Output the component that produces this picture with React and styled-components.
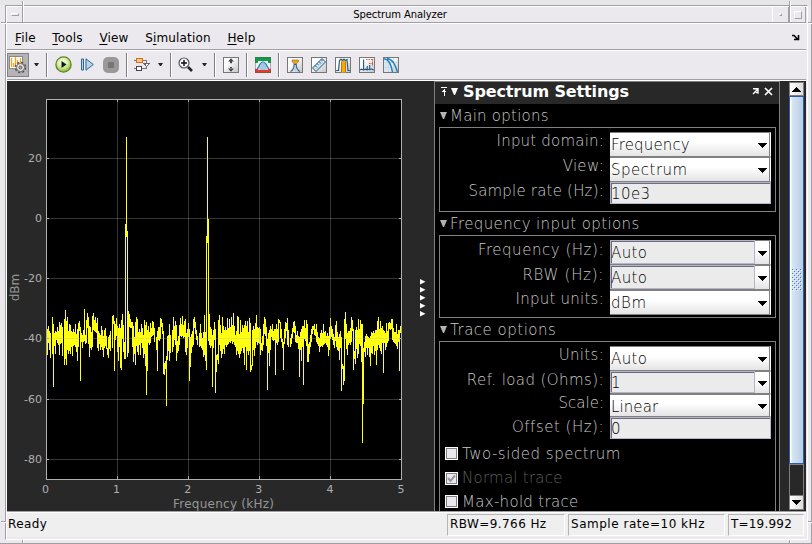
import styled, { createGlobalStyle, css } from 'styled-components';

const TRACE = `10,150 13,65 16,103 19,160 25,40 28,248 31,88 33,148 35,80 37,105 40,68 43,120 46,55 46,150 50,68 52,58 56,155 60,45 61,180
64,18 67,180 70,38 73,148 76,60 78,70 80,148 83,82 85,155 88,75 91,120 94,60 96,135 98,98 100,170 103,65 106,52 109,230 112,88 115,130
118,88 121,15 124,118 127,75 130,28 133,55 136,158 139,70 142,135 145,50 148,28 151,80 154,40 156,85 160,42 163,140 166,88 169,135 172,65
175,100 178,158 181,88 184,72 187,130 190,135 193,160 196,92 200,138 205,42 208,33 211,200 214,90 217,42 220,100 223,170 226,60 229,188
232,195 235,30 238,110 241,162 244,164 244,-195 247,-501 250,-171 250,158 253,20 256,30 259,70 262,55 265,55 268,173 271,100 274,182
277,40 280,55 283,152 286,75 289,150 292,60 295,88 298,160 301,48 304,185 307,55 307,270 310,188 313,65 316,120 319,58 322,98 325,52
328,55 331,95 337,125 340,200 343,68 346,110 349,42 352,50 355,68 358,208 361,210 364,172 367,305 370,140 373,92 376,168 376,60 379,145
385,135 388,40 391,105 394,50 397,168 400,110 403,140 406,92 409,42 412,98 415,36 418,100 421,60 424,45 427,152 430,100 433,58 436,230
439,180 442,90 445,128 448,50 451,40 454,72 457,88 460,108 466,128 469,60 472,130 475,103 478,158 481,32 484,165 487,197 487,-150
490,-501 493,-213 493,110 496,30 499,130 502,75 505,248 508,110 511,55 514,266 517,190 520,150 523,178 526,33 529,110 532,160 535,38
538,110 541,148 544,70 547,128 550,42 553,118 556,45 559,115 562,38 565,118 568,28 571,120 574,92 577,152 580,35 583,45 586,160 589,48
592,138 595,62 598,90 601,180 604,50 607,195 610,50 613,150 616,42 619,203 622,195 625,182 628,65 631,155 634,90 637,33 640,120 643,75
646,68 649,150 652,118 655,138 658,92 661,40 664,50 667,100 670,255 673,88 676,185 679,65 682,98 685,60 688,110 691,75 694,210 697,60
700,120 703,45 706,55 709,55 712,105 715,118 718,195 721,105 724,55 727,80 730,42 733,128 739,128 742,100 745,85 748,62 751,50 754,88
757,115 760,80 763,118 766,218 769,85 772,170 775,65 778,240 781,48 784,110 787,48 790,172 793,172 796,115 799,128 802,90 805,65 808,75
811,60 814,95 817,60 820,118 823,98 826,143 829,100 832,78 835,128 838,60 841,118 844,82 847,120 850,88 853,155 856,110 859,42 862,98
865,75 868,110 871,130 874,80 877,50 880,135 883,98 886,165 889,80 892,260 895,180 898,242 901,228 904,25 907,110 910,150 913,80 916,80
919,120 922,40 925,60 928,195 931,140 934,178 937,68 940,160 943,45 946,118 949,48 952,172 955,60 955,414 958,278 961,115 964,158
967,90 970,150 973,100 976,115 979,185 982,85 985,148 988,80 991,152 994,78 997,180 1000,68 1003,40 1006,130 1009,52 1012,148 1015,65
1018,205 1021,82 1024,135 1027,58 1030,115 1033,60 1036,55 1039,75 1042,45 1045,45 1048,112 1051,85 1054,118 1057,60 1060,132 1063,78
1066,198 1069,65`;

const MEAN = 105;

// one vertical bar per sample; tall spikes keep to their own column
function tracePath() {
  const pts = TRACE.split(/\s+/).map(p => p.split(',').map(Number));
  const px = y => (304 + y / 3).toFixed(1);
  return pts.map(([x, y], i) => {
    const ends = [pts[i - 1], pts[i + 1]].filter(Boolean).map(([, n]) => {
      const own = Math.abs(y - MEAN);
      const next = Math.abs(n - MEAN);
      let reach = 0.6;
      if (own > next) reach = 0.9;
      else if (next > 80) reach = 0.15;
      return y + (n - y) * reach;
    });
    return `M${44.5 + Math.floor(x / 3)} ${px(Math.min(y, ...ends))}V${px(Math.max(y, ...ends) + 2)}`;
  }).join('');
}

const X_TICKS = [0, 1, 2, 3, 4, 5];
const Y_TICKS = [[20, 158], [0, 218], [-20, 278], [-40, 338], [-60, 399], [-80, 459]];

const MENU = ['File', 'Tools', 'View', 'Simulation', 'Help'];

const GROUPS = [
  {
    title: 'Main options',
    ls: 0.25,
    rows: [
      { label: 'Input domain:', ls: 0.2, value: 'Frequency', vls: 0.15, type: 'select', h: 25 },
      { label: 'View:', ls: 0.3, value: 'Spectrum', vls: 0.5, type: 'select', h: 25 },
      { label: 'Sample rate (Hz):', ls: 0.2, value: '10e3', vls: 0.4, type: 'input', h: 23 },
    ],
    height: 85,
  },
  {
    title: 'Frequency input options',
    ls: 0.38,
    rows: [
      { label: 'Frequency (Hz):', ls: 0.53, shift: 2, value: 'Auto', vls: 0.4, type: 'edit', h: 25 },
      { label: 'RBW (Hz):', ls: 0.7, shift: 2, value: 'Auto', vls: 0.4, type: 'edit', h: 25 },
      { label: 'Input units:', ls: 0.25, value: 'dBm', vls: 0.6, type: 'select', h: 25 },
    ],
    height: 83,
  },
  {
    title: 'Trace options',
    ls: 0.5,
    rows: [
      { label: 'Units:', ls: 0.3, value: 'Auto', vls: 0.4, type: 'select', h: 25 },
      { label: 'Ref. load (Ohms):', ls: 0.42, value: '1', type: 'edit', h: 23 },
      { label: 'Scale:', value: 'Linear', vls: 0.1, type: 'select', h: 23 },
      { label: 'Offset (Hz):', ls: 0.5, shift: 2, value: '0', type: 'input', h: 23 },
    ],
    checks: [
      { label: 'Two-sided spectrum', ls: 0.5, h: 25 },
      { label: 'Normal trace', ls: 0.25, checked: true, disabled: true, h: 24 },
      { label: 'Max-hold trace', ls: 0.3, h: 23 },
    ],
    height: 180,
  },
];

function Tile({ children }) {
  return (
    <svg width="16" height="16" viewBox="0 0 16 16">
      <defs>
        <linearGradient id="tile" x1="0" y1="0" x2="1" y2="1">
          <stop offset=".3" stopColor="#fff" />
          <stop offset="1" stopColor="#c4c4c4" />
        </linearGradient>
      </defs>
      <rect x=".5" y=".5" width="15" height="15" fill="url(#tile)" stroke="#777" />
      {children}
    </svg>
  );
}

function SettingsIcon() {
  return (
    <svg width="18" height="18" viewBox="0 0 18 18">
      <rect x=".5" y=".5" width="13" height="12" fill="#fff" stroke="#8a8a8a" />
      <path d="M2.5 2v9M4.5 7v4M6.5 1v9M8.5 4v4M11.5 2v5" stroke="#f5a21b" strokeWidth="1.3" fill="none" />
      <circle cx="11.5" cy="11.5" r="5" fill="none" stroke="#555" strokeWidth="1.6" strokeDasharray="2.2 1.727" />
      <circle cx="11.5" cy="11.5" r="4" fill="#ececec" stroke="#666" />
      <circle cx="11.5" cy="11.5" r="1.6" fill="#b4b3b7" stroke="#555" />
    </svg>
  );
}

function PlayIcon() {
  return (
    <svg width="17" height="17" viewBox="0 0 17 17">
      <defs>
        <radialGradient id="play" cx=".45" cy=".35" r=".65">
          <stop offset="0" stopColor="#fbfff0" />
          <stop offset=".5" stopColor="#d8efa4" />
          <stop offset="1" stopColor="#83b934" />
        </radialGradient>
      </defs>
      <circle cx="8.5" cy="8.5" r="7.6" fill="url(#play)" stroke="#5c852c" strokeWidth="1.3" />
      <path d="M6.5 5v7l5-3.500z" fill="#171717" />
    </svg>
  );
}

function StepIcon() {
  return (
    <svg width="13" height="13" viewBox="0 0 13 13">
      <path d="M.5 1h2v11h-2zM5 .8v11.4l7.3-5.7z" fill="#b9d4ea" stroke="#2a6591" />
    </svg>
  );
}

function StopIcon() {
  return (
    <svg width="16" height="16" viewBox="0 0 16 16">
      <rect width="16" height="16" rx="5" fill="#999" />
      <rect x="5" y="5" width="6" height="6" fill="#777" />
    </svg>
  );
}

function BlocksIcon() {
  return (
    <svg width="16" height="16" viewBox="0 0 16 16" shapeRendering="crispEdges">
      <path d="M0 3.5h3M8 3.5h4.5v3M0 11.5h3M7 11.5h5.5v-2" stroke="#777" fill="none" />
      <path d="M10 6.5h5.5L12.7 9.5z" fill="#fff" stroke="#666" />
      <rect x="2.5" y="1.5" width="6" height="4" fill="#ffc68e" stroke="#d96b12" />
      <rect x="2.5" y="9.5" width="5" height="4" fill="#fff" stroke="#444" />
    </svg>
  );
}

function ZoomIcon() {
  return (
    <svg width="16" height="16" viewBox="0 0 16 16">
      <path d="M10 10l4 4" stroke="#252525" strokeWidth="2.6" />
      <circle cx="6" cy="6" r="5" fill="#f4fafc" stroke="#555" strokeWidth="1.2" />
      <path d="M3 6h6M6 3v6" stroke="#111" strokeWidth="1.5" />
    </svg>
  );
}

function ScaleIcon() {
  return (
    <Tile>
      <path d="M5 4.5l3-3.200 3 3.200zM5 11.500l3 3.200 3-3.200zM7 4h2v2.200H7zM7 10h2v2H7z" fill="#444" />
    </Tile>
  );
}

function MaskIcon() {
  return (
    <svg width="16" height="16" viewBox="0 0 16 16">
      <rect width="16" height="16" fill="#eef3f5" />
      <path d="M1 13c3-1 3-8 7-8s4 7 7 8" fill="#b5d4ec" stroke="#3475a8" strokeWidth="1.2" />
      <path d="M8 5v8M6 7v6M10 7v6" stroke="#7fabc9" strokeWidth=".6" />
      <path d="M0 0h16v6h-3V4H3v2H0z" fill="#139c46" />
      <path d="M0 12h3v1h10v-1h3v4H0z" fill="#e23a2b" />
      <rect x=".5" y=".5" width="15" height="15" fill="none" stroke="#555" strokeOpacity=".45" />
    </svg>
  );
}

function PeakIcon() {
  return (
    <Tile>
      <path d="M5 3h6.5v1.5L9.3 7H7.2L5 4.5z" fill="#e9a423" stroke="#98701c" strokeWidth=".7" />
      <path d="M3.5 14.5c2.5-1 3.5-3 3.7-7h2c.2 4 1.2 6 3.7 7" fill="none" stroke="#34628d" strokeWidth="1.2" />
      <path d="M8.2 8v6" stroke="#9dc0dc" />
    </Tile>
  );
}

function RulerIcon() {
  return (
    <Tile>
      <path d="M1.5 11L11 1.5 14.5 5 5 14.5z" fill="#c6e0f0" stroke="#2d5878" />
      <path d="M4 8.5l2 2M6 6.5l1.500 1.500M8 4.5l2 2M10 2.5L11.5 4" stroke="#2d5878" strokeWidth=".9" />
    </Tile>
  );
}

function BandIcon() {
  return (
    <Tile>
      <path d="M6 3h5v12.500H6z" fill="#f6aa12" />
      <path d="M1 13.5h2.500l1-10L6 2l1.500 1.500L9 2l1.500 1.500L12 2.500l1 11h2" fill="none" stroke="#255f8c" strokeWidth="1.2" />
      <path d="M6.5 5v10M10.500 5v10" stroke="#b36c00" strokeWidth=".8" />
    </Tile>
  );
}

function DistortionIcon() {
  return (
    <Tile>
      <path d="M1 13l1.500-.8 1 .5 1.100-.5V2.500V13l2-.8 1.600.6V9v4l2.500-1V8v4.500l2-.5 2 1" fill="none" stroke="#1d5384" strokeWidth="1.1" />
      <path d="M7 2.500h7M10 6.500h4M13.500 2v7" stroke="#df5a33" strokeDasharray="1.5 1" fill="none" />
    </Tile>
  );
}

function CcdfIcon() {
  return (
    <Tile>
      <path d="M1 1.500C7 2 9 7 9.500 15H1z" fill="#d7e8f4" />
      <path d="M5.500 1v14M10.500 1v14M1 5.500h14M1 10.500h14" stroke="#cdd5da" strokeWidth=".8" />
      <path d="M1 1.800C6 2 8 7 9.500 15M4 1.500c6 1 8 6 10.500 13.500" fill="none" stroke="#1781bd" strokeWidth="1.4" />
    </Tile>
  );
}

const TOOLS = [
  { icon: SettingsIcon, pressed: true, menu: 5, sep: 7 },
  { icon: PlayIcon, at: 7, after: 9 },
  { icon: StepIcon, after: 9 },
  { icon: StopIcon, sep: 7 },
  { icon: BlocksIcon, at: 6, menu: 8, sep: 7 },
  { icon: ZoomIcon, at: 6, menu: 8, sep: 7 },
  { icon: ScaleIcon, at: 7, sep: 7 },
  { icon: MaskIcon, at: 7, sep: 7 },
  { icon: PeakIcon, at: 7, after: 8 },
  { icon: RulerIcon, after: 8 },
  { icon: BandIcon, after: 8 },
  { icon: DistortionIcon, after: 8 },
  { icon: CcdfIcon },
];

function Plot() {
  return (
    <PlotArea width="427" height="430" viewBox="7 81 427 430">
      <rect x="46" y="99" width="356" height="381" fill="#000" />
      <g shapeRendering="crispEdges">
        <path d={tracePath()} fill="none" stroke="#ffff11" />
        {X_TICKS.slice(1, 5).map(t => (
          <rect key={t} x={46 + 71 * t} y="100" width="1" height="379" fill="#afafaf" fillOpacity=".3" />
        ))}
        {Y_TICKS.map(([t, y]) => (
          <rect key={t} x="47" y={y} width="354" height="1" fill="#afafaf" fillOpacity=".3" />
        ))}
        {X_TICKS.map(t => (
          <path key={t} d={`M${46.5 + 71 * t} 99v3M${46.5 + 71 * t} 476v3`} stroke="#afafaf" />
        ))}
        {Y_TICKS.map(([t, y]) => (
          <path key={t} d={`M46 ${y + 0.5}h3M399 ${y + 0.5}h3`} stroke="#afafaf" />
        ))}
        <rect x="46.5" y="99.5" width="355" height="380" fill="none" stroke="#afafaf" />
      </g>
      <g fill="#afafaf" fontSize="11">
        {Y_TICKS.map(([t, y]) => (
          <text key={t} x="42" y={y + 4} textAnchor="end">{t}</text>
        ))}
        {X_TICKS.map(t => (
          <text key={t} x={45.5 + 71.1 * t} y="493" textAnchor="middle">{t}</text>
        ))}
      </g>
      <g fill="#969696" fontSize="12">
        <text x="223.5" y="508" textAnchor="middle" textLength="101">Frequency (kHz)</text>
        <text transform="translate(19 287.5) rotate(-90)" textAnchor="middle">dBm</text>
      </g>
      <path d="M420 279v5.500l5.500-2.700zM420 287v5.500l5.500-2.700zM420 295v5.500l5.500-2.700zM420 303v5.500l5.500-2.700zM420 311v5.500l5.500-2.700z" fill="#fff" />
    </PlotArea>
  );
}

function Field({ type, value, h, vls }) {
  if (type === 'input') return <Input $h={h - 1} $ls={vls}>{value}</Input>;
  if (type === 'edit') {
    return (
      <Combo $h={h}>
        <Input $h={h - 1} $ls={vls} $grow>{value}</Input>
        <DropButton><Caret /></DropButton>
      </Combo>
    );
  }
  return (
    <Combo $h={h}>
      <Value $ls={vls} $h={h}>{value}</Value>
      <DropCaret><Caret /></DropCaret>
    </Combo>
  );
}

function Caret({ up }) {
  return (
    <svg width="9" height="5" viewBox="0 0 9 5" shapeRendering="crispEdges">
      <path d={up ? 'M0 5L4 0h1l4 5z' : 'M0 0h9L5 5H4z'} fill="#000" />
    </svg>
  );
}

function Settings() {
  return (
    <Panel>
      <PanelHead>
        <svg width="6" height="9" viewBox="0 0 6 9" shapeRendering="crispEdges">
          <path d="M0 .5h6M3 2v7M1 4.5h4M2 3.5h2" stroke="#fff" fill="none" />
        </svg>
        <Triangle $white />
        <PanelTitle>Spectrum Settings</PanelTitle>
        <svg width="22" height="10" viewBox="0 0 22 10">
          <path d="M1 1.800h5v5M1 7l5-5M3 4l2 2" stroke="#fff" strokeWidth="1.4" fill="none" />
          <path d="M13 1l7 7M20 1l-7 7" stroke="#fff" strokeWidth="1.7" />
        </svg>
      </PanelHead>
      {GROUPS.map(g => (
        <div key={g.title}>
          <GroupTitle $ls={g.ls}><Triangle />{g.title}</GroupTitle>
          <Group $h={g.height} $open={!!g.checks}>
            {g.rows.map(r => (
              <Row key={r.label} $h={r.h}>
                <Label $ls={r.ls} $shift={r.shift}>{r.label}</Label>
                <Field {...r} />
              </Row>
            ))}
            {g.checks && (
              <Checks>
                {g.checks.map(c => (
                  <Check key={c.label} $h={c.h} $ls={c.ls} $disabled={c.disabled}>
                    <Box>
                      {c.checked && (
                        <svg width="9" height="9" viewBox="0 0 9 9"><path d="M1 4l2.5 3L8 1.5" stroke="#9b99a0" strokeWidth="2" fill="none" /></svg>
                      )}
                    </Box>
                    <span>{c.label}</span>
                  </Check>
                ))}
              </Checks>
            )}
          </Group>
        </div>
      ))}
    </Panel>
  );
}

export default function App() {
  return (
    <Desktop>
      <GlobalStyle />
      <Window>
        <TitleBar>
          <TitleButton><Dash /></TitleButton>
          <Title>Spectrum Analyzer</Title>
          <TitleButton $left><Square $s={3} /></TitleButton>
          <TitleButton $left><Square $s={8} /></TitleButton>
        </TitleBar>
        <MenuBar>
          {MENU.map(m => {
            const i = m === 'Simulation' ? 1 : 0;
            return <MenuItem key={m}>{m.slice(0, i)}<u>{m[i]}</u>{m.slice(i + 1)}</MenuItem>;
          })}
          <Undock width="8" height="7" viewBox="0 0 8 7">
            <path d="M0 1.5h2l4 4M2 5.5h4.500V1" stroke="#000" strokeWidth="1.6" fill="none" />
          </Undock>
        </MenuBar>
        <Toolbar>
          {TOOLS.map(({ icon: Icon, at, after, menu, sep, pressed }, i) => (
            <ToolItem key={i}>
              <Tool $pressed={pressed} $at={at} $after={after}><Icon /></Tool>
              {menu && <MenuArrow $gap={menu} />}
              {sep && <Separator $gap={sep} />}
            </ToolItem>
          ))}
        </Toolbar>
        <Content>
          <Plot />
          <Settings />
          <Scrollbar>
            <ScrollButton $h={14}><Caret up /></ScrollButton>
            <Thumb><Grip /></Thumb>
            <Trough />
            <ScrollButton $h={15}><Caret /></ScrollButton>
          </Scrollbar>
        </Content>
        <StatusBar>
          <Ready>Ready</Ready>
          <Status $w={118} $ls={0.42}>RBW=9.766 Hz</Status>
          <Status $w={157} $ls={0.52}>Sample rate=10 kHz</Status>
          <Status $w={76} $ls={0.2}>T=19.992</Status>
        </StatusBar>
      </Window>
      <Notch $x={22} $y={1} $tall />
      <Notch $x={789} $y={1} $tall />
      <Notch $x={22} $y={540} />
      <Notch $x={789} $y={540} />
      <SideNotch $x={1} $y={22} />
      <SideNotch $x={808} $y={22} />
      <SideNotch $x={1} $y={521} />
      <SideNotch $x={808} $y={521} />
    </Desktop>
  );
}

const GlobalStyle = createGlobalStyle`
  * { box-sizing: border-box; }
  body {
    margin: 0;
    overflow: hidden;
    background: #e6e6e6;
    font-family: "DejaVu Sans", sans-serif;
  }
  svg { display: block; flex: none; }
`;

const Desktop = styled.div`
  position: relative;
  width: 812px;
  height: 544px;
  padding: 5px 3px 3px 5px;
  background: linear-gradient(#e6e6e6 5px, #ebe9ed 5px);
  border-right: 1px solid #a19fa4;
  border-bottom: 1px solid #a19fa4;
`;

const Window = styled.div`
  display: flex;
  flex-direction: column;
  width: 803px;
  height: 535px;
  background: #ebe9ed;
  border: 1px solid #a19fa4;
  border-right-color: #fff;
  border-bottom-color: #fff;
  box-shadow: inset 1px 1px #fff;
  padding: 1px 1px 0 1px;
`;

const TitleBar = styled.div`
  display: flex;
  height: 16px;
  flex: none;
  border-bottom: 1px solid #a19fa4;
`;

const TitleButton = styled.div`
  display: flex;
  align-items: center;
  justify-content: center;
  width: 16px;
  border-right: 1px solid #a19fa4;
  ${props => props.$left && css`
    width: 17px;
    border-left: 1px solid #fff;
  `}
`;

const Title = styled.div`
  flex: 1;
  padding-left: 5px;
  text-align: center;
  font-size: 10px;
  letter-spacing: -0.1px;
  line-height: 15px;
  color: #000;
`;

const Dash = styled.span`
  width: 8px;
  height: 3px;
  border: 1px solid #a19fa4;
  border-top-color: #fff;
  border-left-color: #fff;
`;

const Square = styled.span`
  width: ${props => props.$s}px;
  height: ${props => props.$s}px;
  border: 1px solid #a19fa4;
  border-top-color: #fff;
  border-left-color: #fff;
`;

const MenuBar = styled.div`
  display: flex;
  flex: none;
  align-items: center;
  gap: 16.6px;
  height: 27px;
  padding: 2px 6px 0 8px;
  border-top: 1px solid #fff;
  border-bottom: 1px solid #a19fa4;
`;

const MenuItem = styled.div`
  font-size: 12px;
  letter-spacing: 0.17px;
  line-height: 16px;
  u { text-underline-offset: 2px; }
`;

const Undock = styled.svg`
  margin-left: auto;
`;

const Toolbar = styled.div`
  display: flex;
  flex: none;
  align-items: center;
  height: 30px;
  padding-bottom: 1px;
  border-top: 1px solid #fff;
  border-bottom: 1px solid #a19fa4;
`;

const ToolItem = styled.div`
  display: flex;
  align-items: center;
`;

const Tool = styled.div`
  display: flex;
  align-items: center;
  justify-content: center;
  height: 24px;
  margin-left: ${props => props.$at || 0}px;
  margin-right: ${props => props.$after || 0}px;
  ${props => props.$pressed && css`
    width: 22px;
    background: #b4b3b7;
    border: 1px solid #828184;
  `}
`;

const MenuArrow = styled.span`
  width: 5px;
  margin-left: ${props => props.$gap}px;
  border: 3px solid transparent;
  border-width: 3px 2.5px 0;
  border-top-color: #222;
`;

const Separator = styled.span`
  width: 2px;
  height: 24px;
  margin-left: ${props => props.$gap}px;
  background: linear-gradient(90deg, #807f83 50%, #fff 50%);
`;

const Content = styled.div`
  display: flex;
  flex: none;
  height: 431px;
  border-top: 1px solid #fff;
  background: #282828;
  overflow: hidden;
`;

const PlotArea = styled.svg`
  font-family: "DejaVu Sans", sans-serif;
`;

const Panel = styled.div`
  flex: none;
  width: 346px;
  background: #000;
  border-left: 1px solid #808080;
  border-right: 1px solid #808080;
  font-size: 15px;
  font-weight: 200;
  overflow: hidden;
`;

const PanelHead = styled.div`
  display: flex;
  align-items: center;
  height: 23px;
  padding: 0 5px 3px 6px;
  border-top: 1px solid #808080;
  background: #282828;
`;

const PanelTitle = styled.div`
  flex: 1;
  margin-left: 5px;
  font-size: 16px;
  font-weight: 700;
  letter-spacing: -0.12px;
  line-height: 18px;
  color: #fff;
`;

const Triangle = styled.span`
  flex: none;
  width: 7px;
  margin: 0 0 0 4px;
  border: 3.5px solid transparent;
  border-top: 7px solid ${props => props.$white ? '#fff' : '#b4b4b4'};
  border-bottom: 0;
`;

const GroupTitle = styled.div`
  display: flex;
  align-items: center;
  gap: 3px;
  height: 23px;
  padding-left: 1px;
  letter-spacing: ${props => props.$ls || 0}px;
  line-height: 22px;
  color: #c8c8c8;
`;

const Group = styled.div`
  height: ${props => props.$h}px;
  margin-left: 4px;
  width: 337px;
  padding: 4px 4px 0 0;
  border: 1px solid #808080;
  ${props => props.$open && 'border-bottom: 0;'}
`;

const Row = styled.div`
  display: grid;
  grid-template-columns: 170px 161px;
  height: ${props => props.$h}px;
`;

const Label = styled.div`
  padding: ${props => props.$shift || 1}px 6px 0 0;
  text-align: right;
  letter-spacing: ${props => props.$ls || 0}px;
  line-height: 17px;
  white-space: nowrap;
  color: #c8c8c8;
`;

const Combo = styled.div`
  display: flex;
  height: ${props => props.$h}px;
  background: linear-gradient(#fff 40%, #e4e4e4);
  border-top: 1px solid #808080;
  border-bottom: 1px solid #808080;
  border-right: 1px solid #fff;
  color: #000;
`;

const Value = styled.div`
  flex: 1;
  padding: ${props => props.$h < 25 ? 2 : 1}px 0 0 1px;
  letter-spacing: ${props => props.$ls || 0}px;
  line-height: ${props => props.$h < 25 ? 21 : 23}px;
`;

const Input = styled.div`
  height: ${props => props.$h}px;
  padding: 1px 0 0;
  letter-spacing: ${props => props.$ls || 0}px;
  line-height: 20px;
  color: #000;
  background: #ebebeb;
  border: 1px solid #b4b4cc;
  box-shadow: inset 1px 1px #6c6c7c;
  ${props => props.$grow && css`
    flex: 1;
    margin-top: -1px;
    line-height: ${props.$h - 1}px;
  `}
`;

const DropCaret = styled.div`
  display: flex;
  align-items: center;
  width: 12px;
  padding-top: 1px;
  border-right: 1px solid #808080;
`;

const DropButton = styled(DropCaret)`
  width: 15px;
  padding-left: 3px;
`;

const Checks = styled.div`
  padding: 1px 0 0 5px;
`;

const Check = styled.div`
  display: flex;
  align-items: center;
  gap: 4px;
  height: ${props => props.$h}px;
  letter-spacing: ${props => props.$ls}px;
  color: ${props => props.$disabled ? '#5e5e5e' : '#c8c8c8'};
`;

const Box = styled.span`
  display: flex;
  align-items: center;
  justify-content: center;
  width: 13px;
  height: 13px;
  background: #ebe9ed;
  border: 1px solid #fff;
  box-shadow: inset 1px 1px #808080, inset -1px -1px #808080;
`;

const Scrollbar = styled.div`
  display: flex;
  flex-direction: column;
  width: 15px;
  margin-left: 9px;
  padding-top: 1px;
`;

const ScrollButton = styled.div`
  display: flex;
  flex: none;
  align-items: center;
  justify-content: center;
  height: ${props => props.$h}px;
  background: linear-gradient(90deg, #fff, #dcdcdc);
  border: 1px solid #808080;
`;

const Thumb = styled.div`
  display: flex;
  flex: none;
  align-items: center;
  justify-content: center;
  height: 368px;
  border: 1px solid #2e5ba5;
  background: linear-gradient(90deg, #fff 1px, #d7e5f3 2px, #b8cde4);
`;

const Grip = styled.span`
  width: 10px;
  height: 22px;
  background:
    linear-gradient(#4a76b8, #4a76b8) 0 0 / 0 0,
    conic-gradient(#fff 25%, transparent 0 50%, #4a76b8 0 75%, transparent 0) 0 0 / 4px 4px;
  background:
    conic-gradient(at 1px 1px, transparent 75%, #4a76b8 0) 0 0 / 4px 4px,
    conic-gradient(at 1px 1px, transparent 75%, #4a76b8 0) 2px 2px / 4px 4px,
    conic-gradient(at 1px 1px, transparent 75%, #fff 0) 1px 1px / 4px 4px,
    conic-gradient(at 1px 1px, transparent 75%, #fff 0) 3px 3px / 4px 4px;
`;

const Trough = styled.div`
  height: 31px;
  flex: none;
  border: 1px solid #808080;
  border-width: 1px 1px 0;
`;

const StatusBar = styled.div`
  display: flex;
  height: 26px;
  flex: none;
  padding: 2px 2px 1px 1px;
  gap: 3px;
  background: #efefef;
  border-top: 1px solid #a19fa4;
  font-size: 12px;
  line-height: 21px;
  box-shadow: inset 0 1px #fff;
`;

const Ready = styled.div`
  flex: 1;
  letter-spacing: 0.4px;
`;

const Status = styled.div`
  width: ${props => props.$w}px;
  padding-left: 2px;
  letter-spacing: ${props => props.$ls}px;
  white-space: nowrap;
  border: 1px solid #b4b3b7;
  border-right-color: #fff;
  border-bottom-color: #fff;
  line-height: 19px;
`;

const Notch = styled.span`
  position: absolute;
  left: ${props => props.$x}px;
  top: ${props => props.$y}px;
  width: 2px;
  height: ${props => props.$tall ? 21 : 3}px;
  background: linear-gradient(90deg, #a19fa4 50%, #fff 50%);
`;

const SideNotch = styled.span`
  position: absolute;
  left: ${props => props.$x}px;
  top: ${props => props.$y}px;
  width: ${props => props.$x < 10 ? 5 : 4}px;
  height: 2px;
  background: linear-gradient(#a19fa4 50%, #fff 50%);
`;
